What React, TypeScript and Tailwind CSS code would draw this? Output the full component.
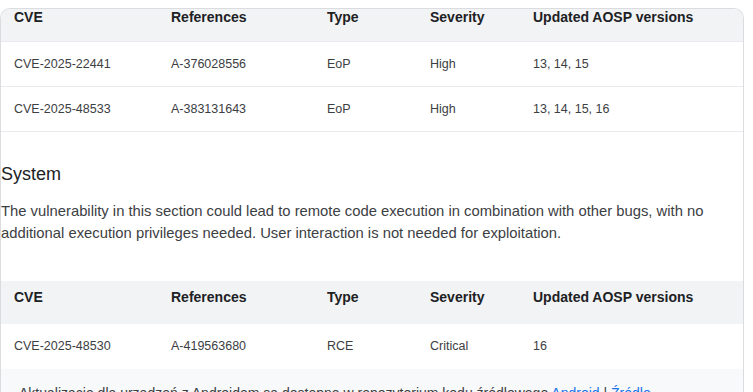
import React from "react";

type Row = { cve: string; ref: string; type: string; severity: string; versions: string };

const cols = "grid grid-cols-[156px_156px_103px_103px_1fr]";

const headers = ["CVE", "References", "Type", "Severity", "Updated AOSP versions"];

const firstRows: Row[] = [
  { cve: "CVE-2025-22441", ref: "A-376028556", type: "EoP", severity: "High", versions: "13, 14, 15" },
  { cve: "CVE-2025-48533", ref: "A-383131643", type: "EoP", severity: "High", versions: "13, 14, 15, 16" },
];

const systemRows: Row[] = [
  { cve: "CVE-2025-48530", ref: "A-419563680", type: "RCE", severity: "Critical", versions: "16" },
];

function DataRow({ row, last }: { row: Row; last?: boolean }) {
  return (
    <div
      className={`${cols} h-[45px] items-center text-[12.5px] text-[#3c4043] ${
        last ? "" : "border-b border-[#e8eaed]"
      }`}
    >
      <span className="pl-[13px]">{row.cve}</span>
      <span className="pl-[14px]">{row.ref}</span>
      <span className="pl-[14px]">{row.type}</span>
      <span className="pl-[14px]">{row.severity}</span>
      <span className="pl-[14px]">{row.versions}</span>
    </div>
  );
}

function HeaderCells() {
  return (
    <>
      {headers.map((h, i) => (
        <span key={h} className={i === 0 ? "pl-[13px]" : "pl-[14px]"}>
          {h}
        </span>
      ))}
    </>
  );
}

export default function App() {
  return (
    <div className="min-h-screen bg-white pt-[8px] pr-[9px] font-['Liberation_Sans',Arial,sans-serif]">
      <div className="overflow-hidden rounded-t-[10px] border-x border-t border-[#dadce0]">
        {/* first table, header scrolled partly out of view */}
        <div
          className={`${cols} h-[33px] items-start border-b border-[#e8eaed] bg-[#f1f3f4] pt-[1px] text-[14px] font-bold leading-[14px] text-[#202124]`}
        >
          <HeaderCells />
        </div>
        {firstRows.map((r) => (
          <DataRow key={r.cve} row={r} />
        ))}

        <h2 className="mt-[30px] text-[18px] leading-[24px] font-normal text-[#202124]">System</h2>
        <p className="mt-[14px] text-[14.8px] leading-[22px] text-[#3c4043]">
          The vulnerability in this section could lead to remote code execution in combination with other bugs, with no
          additional execution privileges needed. User interaction is not needed for exploitation.
        </p>

        <div className="mt-[37px]">
          <div
            className={`${cols} h-[43px] items-start bg-[#f1f3f4] pt-[6px] text-[14px] font-bold leading-[20px] text-[#202124]`}
          >
            <HeaderCells />
          </div>
          {systemRows.map((r) => (
            <DataRow key={r.cve} row={r} last />
          ))}
        </div>

        <div className="bg-[#f8f9fa] pt-[14px] pb-[16px] pl-[18px] text-[14px] leading-[20px] text-[#3c4043]">
          Aktualizacje dla urządzeń z Androidem są dostępne w repozytorium kodu źródłowego{" "}
          <span className="text-[#1a73e8]">Android</span> | <span className="text-[#1a73e8]">Źródło</span>
        </div>
      </div>
    </div>
  );
}
